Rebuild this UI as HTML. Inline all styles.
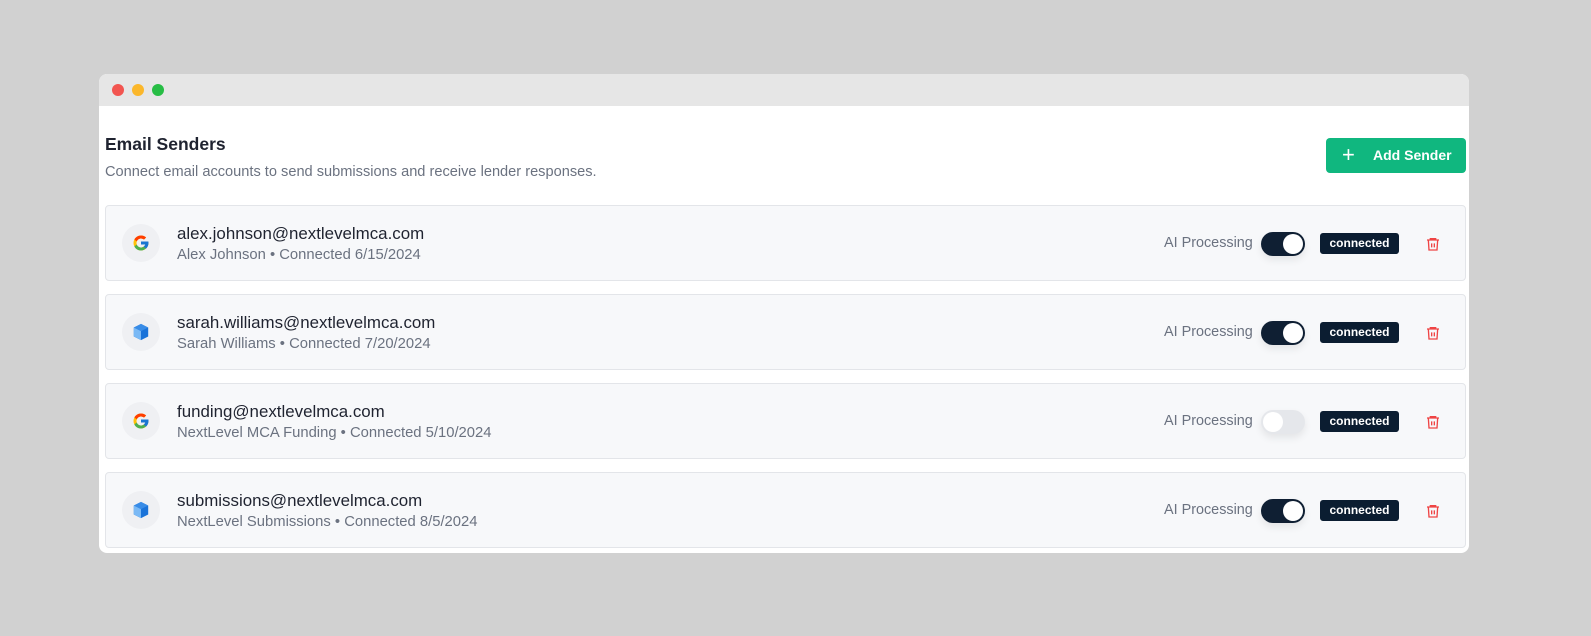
<!DOCTYPE html>
<html><head><style>
*{box-sizing:border-box;margin:0;padding:0}
body{width:1591px;height:636px;background:#d1d1d1;font-family:"Liberation Sans",sans-serif;position:relative;overflow:hidden}
.win{position:absolute;left:99px;top:74px;width:1370px;height:479px;background:#fff;border-radius:8px;overflow:hidden}
.bar{height:32px;background:#e6e6e6;position:relative}
.dot{position:absolute;top:10px;width:12px;height:12px;border-radius:50%}
h1{position:absolute;left:6px;top:60px;font-size:17.5px;font-weight:bold;color:#1f2330}
.sub{position:absolute;left:6px;top:90px;font-size:14.6px;color:#6b7280}
.btn{position:absolute;left:1227px;top:64px;width:140px;height:35px;background:#10b77f;border-radius:4px;color:#fff;font-size:14px;font-weight:bold}
.btn .p{position:absolute;left:16px;top:4px;font-size:22px;font-weight:normal}
.btn .t{position:absolute;left:47px;top:9px}
.card{position:absolute;left:6px;width:1361px;height:76px;background:#f7f8fa;border:1px solid #e3e5e9;border-radius:4px}
.ic{position:absolute;left:16px;top:18px;width:38px;height:38px;border-radius:50%;background:#eff0f3}
.ic svg{position:absolute;left:10px;top:10px}
.em{position:absolute;left:71px;top:18px;font-size:16.9px;color:#1f2330}
.nm{position:absolute;left:71px;top:41px;font-size:14.8px;color:#6b7280}
.ai{position:absolute;left:1058px;top:29px;font-size:14.4px;color:#6b7280}
.tg{position:absolute;left:1155px;top:26px;width:44px;height:24px;border-radius:12px;background:#0f1f33;box-shadow:0 4px 8px rgba(0,0,0,.08)}
.tg i{position:absolute;top:2px;left:22px;width:20px;height:20px;border-radius:50%;background:#fff}
.tg.off{background:#e5e7eb}.tg.off i{left:2px}
.bd{position:absolute;left:1214px;top:27px;width:79px;height:21px;background:#0b1d31;border-radius:3px;color:#fff;font-size:12px;font-weight:bold;text-align:center;line-height:21px}
.tr{position:absolute;left:1319px;top:29px}
</style></head><body>
<div class="win">
<div class="bar"><div class="dot" style="left:13px;background:#f25550"></div><div class="dot" style="left:33px;background:#fbb72b"></div><div class="dot" style="left:53px;background:#27bd45"></div></div>
<h1>Email Senders</h1>
<div class="sub">Connect email accounts to send submissions and receive lender responses.</div>
<div class="btn"><span class="p">+</span><span class="t">Add Sender</span></div>

<div class="card" style="top:131px"><div class="ic"><svg width="18" height="18" viewBox="0 0 48 48"><path fill="#FFC107" d="M43.6 20H24v8h11.3C33.7 32.7 29.2 36 24 36c-6.6 0-12-5.4-12-12s5.4-12 12-12c3.1 0 5.8 1.2 7.9 3.1l5.7-5.7C34 6.1 29.3 4 24 4 13 4 4 13 4 24s9 20 20 20 20-9 20-20c0-1.3-.1-2.7-.4-4z"/><path fill="#FF3D00" d="M6.3 14.7l6.6 4.8C14.7 15.1 19 12 24 12c3.1 0 5.8 1.2 7.9 3.1l5.7-5.7C34 6.1 29.3 4 24 4 16.3 4 9.7 8.3 6.3 14.7z"/><path fill="#4CAF50" d="M24 44c5.2 0 9.9-2 13.4-5.2l-6.2-5.2C29.2 35.1 26.7 36 24 36c-5.2 0-9.6-3.3-11.3-8l-6.5 5C9.5 39.6 16.2 44 24 44z"/><path fill="#1976D2" d="M43.6 20H24v8h11.3c-.8 2.2-2.2 4.2-4.1 5.6l6.2 5.2C37 39.2 44 34 44 24c0-1.3-.1-2.7-.4-4z"/></svg></div>
<div class="em">alex.johnson@nextlevelmca.com</div><div class="nm">Alex Johnson • Connected 6/15/2024</div>
<div class="ai">AI Processing</div><div class="tg"><i></i></div><div class="bd">connected</div>
<svg class="tr" width="16" height="18" viewBox="0 0 24 24" fill="none" stroke="#ef4444" stroke-width="2"><path d="M3 6h18M8 6V4h8v2M5 6l1 15h12l1-15M10 11v6M14 11v6"/></svg></div>

<div class="card" style="top:220px"><div class="ic"><svg width="18" height="18" viewBox="0 0 20 20"><path fill="#1a73d9" d="M10 1l8 4v10l-8 4-8-4V5z"/><path fill="#7ab9f5" d="M2 5l8 4v10l-8-4z"/><path fill="#4d9cf0" d="M2 5l8-4 8 4-8 4z" opacity=".6"/></svg></div>
<div class="em">sarah.williams@nextlevelmca.com</div><div class="nm">Sarah Williams • Connected 7/20/2024</div>
<div class="ai">AI Processing</div><div class="tg"><i></i></div><div class="bd">connected</div>
<svg class="tr" width="16" height="18" viewBox="0 0 24 24" fill="none" stroke="#ef4444" stroke-width="2"><path d="M3 6h18M8 6V4h8v2M5 6l1 15h12l1-15M10 11v6M14 11v6"/></svg></div>

<div class="card" style="top:309px"><div class="ic"><svg width="18" height="18" viewBox="0 0 48 48"><path fill="#FFC107" d="M43.6 20H24v8h11.3C33.7 32.7 29.2 36 24 36c-6.6 0-12-5.4-12-12s5.4-12 12-12c3.1 0 5.8 1.2 7.9 3.1l5.7-5.7C34 6.1 29.3 4 24 4 13 4 4 13 4 24s9 20 20 20 20-9 20-20c0-1.3-.1-2.7-.4-4z"/><path fill="#FF3D00" d="M6.3 14.7l6.6 4.8C14.7 15.1 19 12 24 12c3.1 0 5.8 1.2 7.9 3.1l5.7-5.7C34 6.1 29.3 4 24 4 16.3 4 9.7 8.3 6.3 14.7z"/><path fill="#4CAF50" d="M24 44c5.2 0 9.9-2 13.4-5.2l-6.2-5.2C29.2 35.1 26.7 36 24 36c-5.2 0-9.6-3.3-11.3-8l-6.5 5C9.5 39.6 16.2 44 24 44z"/><path fill="#1976D2" d="M43.6 20H24v8h11.3c-.8 2.2-2.2 4.2-4.1 5.6l6.2 5.2C37 39.2 44 34 44 24c0-1.3-.1-2.7-.4-4z"/></svg></div>
<div class="em">funding@nextlevelmca.com</div><div class="nm">NextLevel MCA Funding • Connected 5/10/2024</div>
<div class="ai">AI Processing</div><div class="tg off"><i></i></div><div class="bd">connected</div>
<svg class="tr" width="16" height="18" viewBox="0 0 24 24" fill="none" stroke="#ef4444" stroke-width="2"><path d="M3 6h18M8 6V4h8v2M5 6l1 15h12l1-15M10 11v6M14 11v6"/></svg></div>

<div class="card" style="top:398px"><div class="ic"><svg width="18" height="18" viewBox="0 0 20 20"><path fill="#1a73d9" d="M10 1l8 4v10l-8 4-8-4V5z"/><path fill="#7ab9f5" d="M2 5l8 4v10l-8-4z"/><path fill="#4d9cf0" d="M2 5l8-4 8 4-8 4z" opacity=".6"/></svg></div>
<div class="em">submissions@nextlevelmca.com</div><div class="nm">NextLevel Submissions • Connected 8/5/2024</div>
<div class="ai">AI Processing</div><div class="tg"><i></i></div><div class="bd">connected</div>
<svg class="tr" width="16" height="18" viewBox="0 0 24 24" fill="none" stroke="#ef4444" stroke-width="2"><path d="M3 6h18M8 6V4h8v2M5 6l1 15h12l1-15M10 11v6M14 11v6"/></svg></div>
</div>
</body></html>
